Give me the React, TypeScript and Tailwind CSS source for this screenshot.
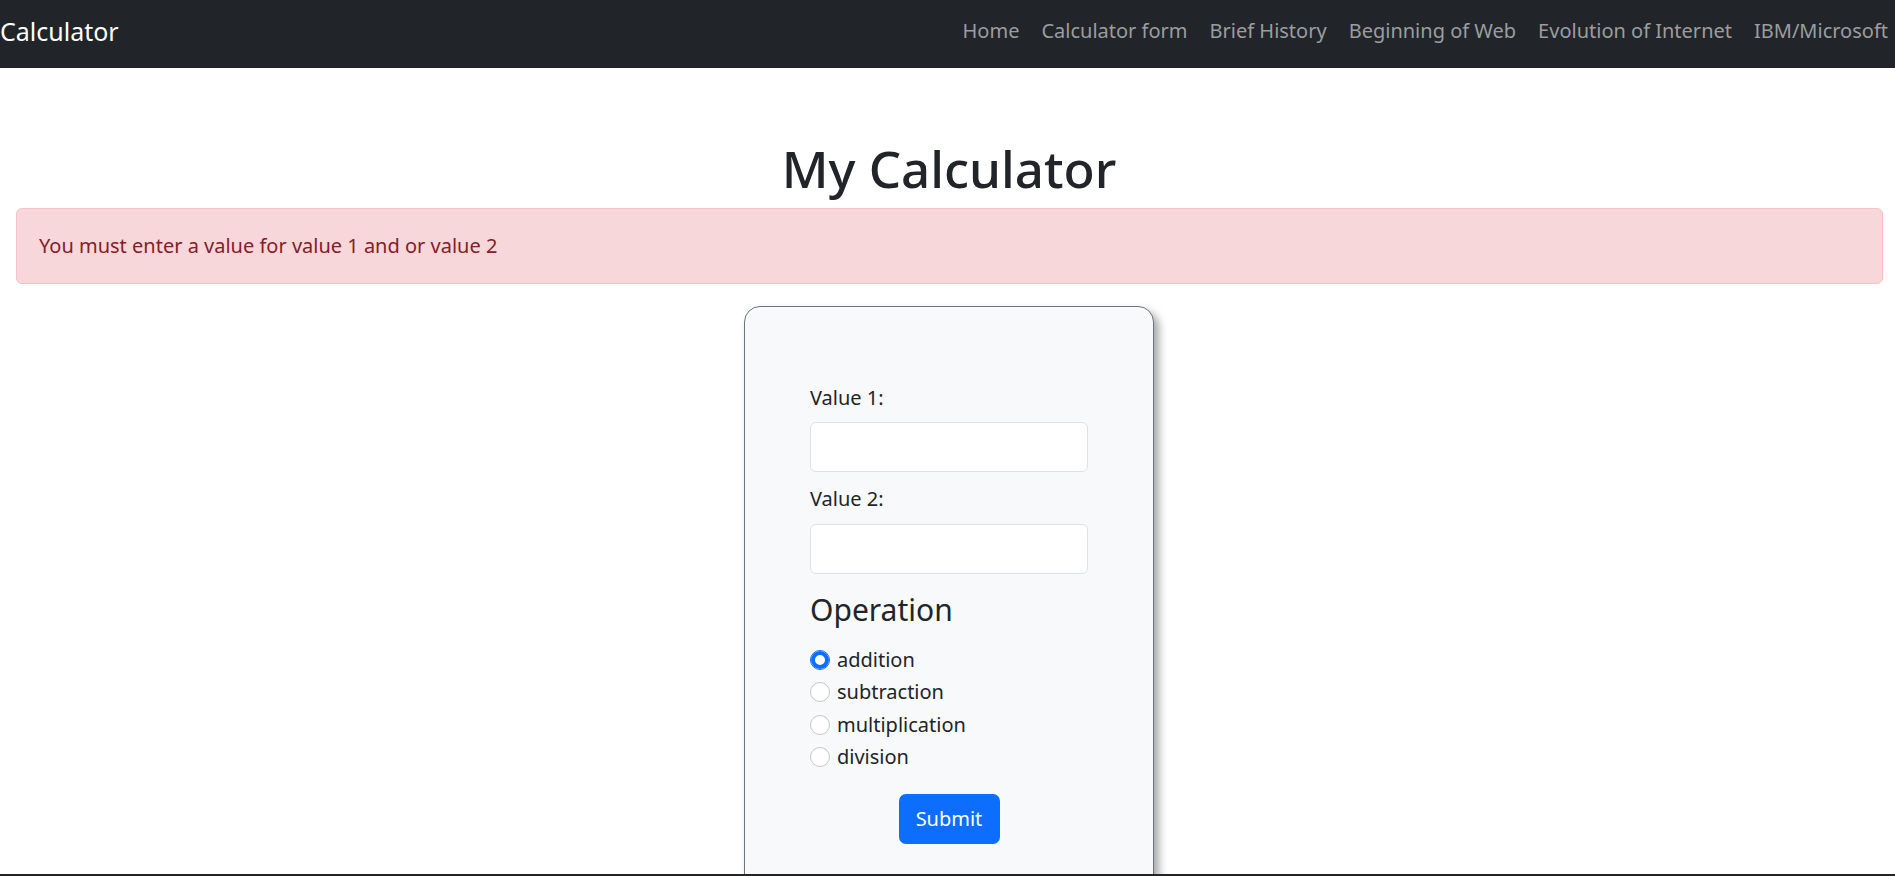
import React from "react";

const links = ["Home", "Calculator form", "Brief History", "Beginning of Web", "Evolution of Internet", "IBM/Microsoft"];

const operations = ["addition", "subtraction", "multiplication", "division"];

const Navbar = () => {
  return (
    <nav className="h-[68px] bg-[#212529] flex items-center justify-between pb-[6px]">
      <a href="#" className="text-[25px] leading-[36px] text-white">
        Calculator
      </a>
      <ul className="flex items-center gap-[22px] pr-[7px]">
        {links.map((link) => (
          <li key={link}>
            <a href="#" className="text-[20px] leading-[30px] text-[#9b9d9f]">
              {link}
            </a>
          </li>
        ))}
      </ul>
    </nav>
  );
};

const CalculatorForm = () => {
  return (
    <div className="w-[410px] mx-auto bg-[#f8f9fa] border border-[#6c757d] rounded-[16px] shadow-[5px_5px_8px_rgba(0,0,0,0.35)] pt-[76px] pb-[80px] px-[65px]">
      <form className="flex flex-col">
        <label className="text-[20px] leading-[30px] text-[#212529] mb-[9px]">Value 1:</label>
        <input type="text" className="h-[50px] w-full bg-white border border-[#dee2e6] rounded-[6px] px-3 outline-none" />
        <label className="text-[20px] leading-[30px] text-[#212529] mt-[12px] mb-[10px]">Value 2:</label>
        <input type="text" className="h-[50px] w-full bg-white border border-[#dee2e6] rounded-[6px] px-3 outline-none" />
        <fieldset className="mt-[18px]">
          <legend className="text-[30px] leading-[36px] text-[#212529] mb-[16px]">Operation</legend>
          {operations.map((op, i) => (
            <label key={op} className="flex items-center gap-[7px] h-[32.3px] text-[20px] text-[#212529]">
              <input
                type="radio"
                name="operation"
                defaultChecked={i === 0}
                className="appearance-none w-5 h-5 rounded-full bg-white border border-[#c4c7ca] checked:border-[#0d6efd] checked:shadow-[inset_0_0_0_4px_#0d6efd] shrink-0"
              />
              <span className="leading-[30px]">{op}</span>
            </label>
          ))}
        </fieldset>
        <div className="flex justify-center mt-[21px]">
          <button type="button" className="w-[101px] h-[50px] bg-[#0d6efd] text-white text-[20px] rounded-[7px]">
            Submit
          </button>
        </div>
      </form>
    </div>
  );
};

export default function App() {
  return (
    <div className="min-h-screen bg-white font-['Segoe_UI','Noto_Sans',sans-serif]">
      <Navbar />
      <main className="pt-[70px] pl-[3px]">
        <h1 className="text-center text-[51px] leading-[60px] font-medium text-[#212529] mb-[10px]">My Calculator</h1>
        <div className="ml-[13px] mr-[12px] mb-[22px] bg-[#f8d7da] border border-[#f5c2c7] rounded-[6px] px-[22px] py-[22px] text-[20px] leading-[30px] text-[#842029]">
          You must enter a value for value 1 and or value 2
        </div>
        <CalculatorForm />
      </main>
      <footer className="fixed bottom-0 inset-x-0 h-[2px] bg-[#212529]" />
    </div>
  );
}
